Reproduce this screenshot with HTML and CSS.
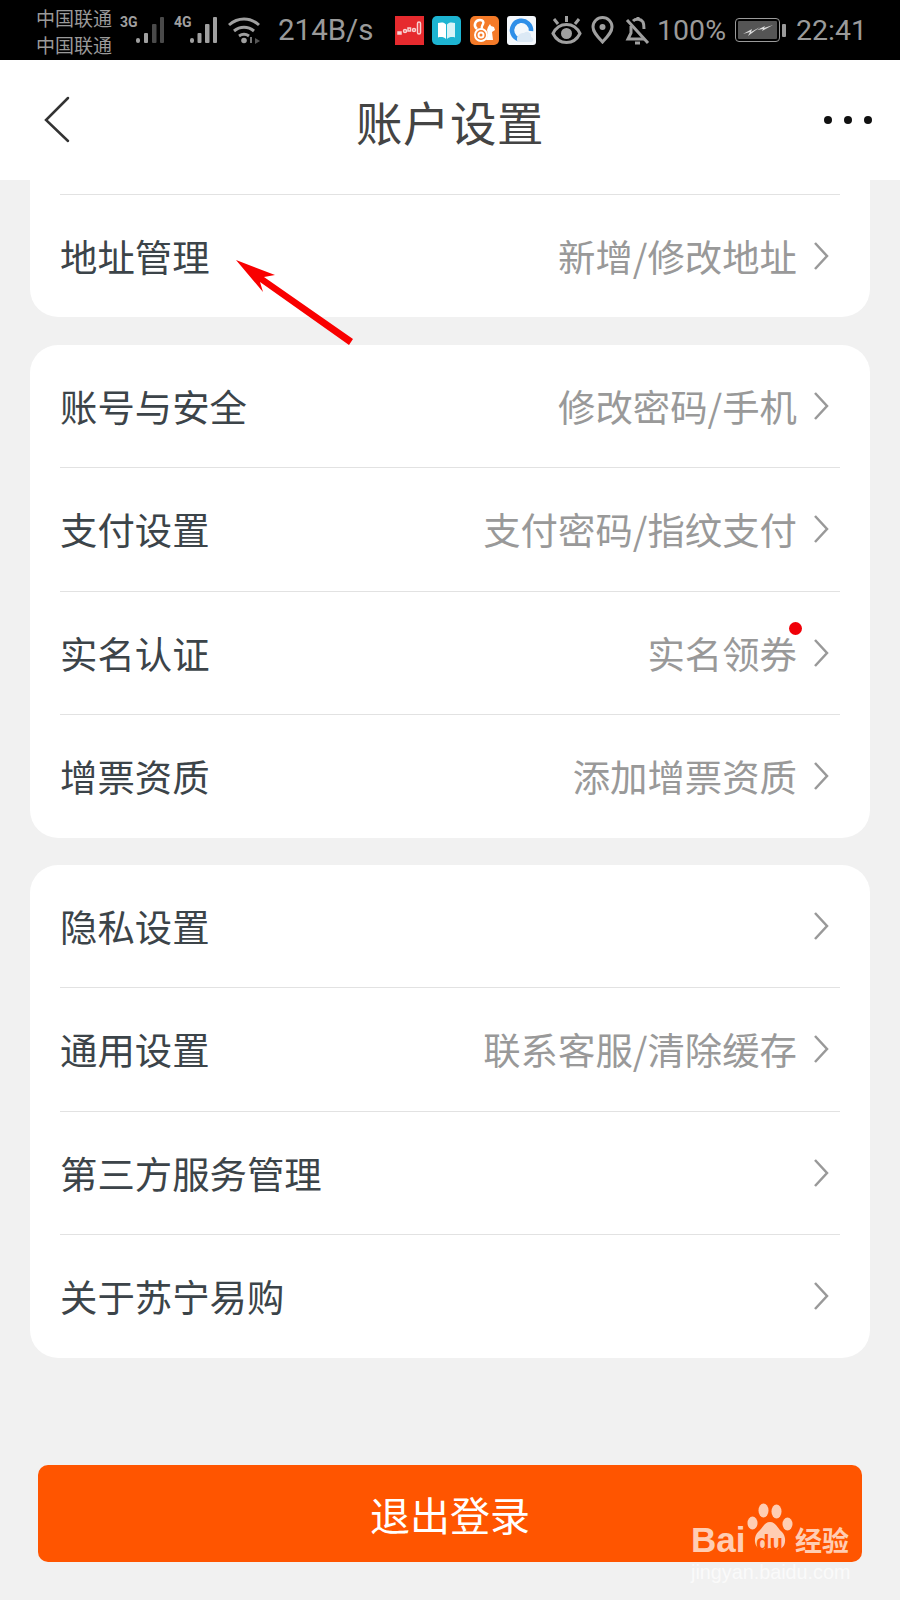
FILE: index.html
```html
<!DOCTYPE html>
<html lang="zh-CN">
<head>
    <meta charset="UTF-8">
    <meta name="viewport" content="width=device-width, initial-scale=1.0">
    <title>账户设置</title>
    <link rel="stylesheet" href="styles.css">
</head>
<body>
    <div class="page">
        <div class="status-bar">
            <div class="status-left">
                <div class="carrier"><span>中国联通</span><span>中国联通</span></div>
                <div class="signal">
                    <span class="net">3G</span>
                    <svg width="30" height="30" viewBox="0 0 30 30"><g fill="#a0a0a0"><rect x="1" y="23" width="4" height="5" rx="2"/><rect x="9" y="18" width="4" height="10" rx="1"/></g><g fill="#4a4a4a"><rect x="17" y="9" width="4.500" height="19" rx="1"/><rect x="25" y="2" width="4" height="26" rx="1"/></g></svg>
                </div>
                <div class="signal">
                    <span class="net">4G</span>
                    <svg width="30" height="30" viewBox="0 0 30 30"><g fill="#a0a0a0"><rect x="1" y="23" width="4" height="5" rx="2"/><rect x="8.500" y="18" width="4" height="10" rx="1"/><rect x="16" y="9" width="4.500" height="19" rx="1"/><rect x="24" y="2" width="4" height="26" rx="1"/></g></svg>
                </div>
                <svg class="wifi" width="33" height="30" viewBox="0 0 33 30" fill="none" stroke="#a0a0a0" stroke-width="3"><path d="M1 10c9-8 21-8 30 0"/><path d="M6 16c6-5 14-5 20 0"/><path d="M11 21c3-2 7-2 10 0"/><circle cx="16" cy="25.500" r="2.800" fill="#a0a0a0" stroke="none"/><path d="M22 22h2v6h-2z" fill="#777" stroke="none"/><path d="M27 23l5 3-5 3z" fill="#555" stroke="none"/></svg>
                <span class="speed">214B/s</span>
                <div class="apps">
                    <div class="app app-red"><svg width="29" height="29" viewBox="0 0 29 29" fill="none" stroke="#f8d2d2" stroke-width="1.500"><rect x="3" y="16" width="3" height="2" fill="#f8d2d2"/><circle cx="10" cy="15" r="1.500"/><rect x="13" y="12" width="2.500" height="3"/><circle cx="19" cy="14" r="1.500"/><rect x="22.500" y="6" width="3" height="12" rx="1.500"/></svg></div>
                    <div class="app app-blue"><svg width="29" height="29" viewBox="0 0 29 29"><path d="M6 7c3-1 6.500-1 8 1.500V23c-2-2-5-2.500-8-1.500z" fill="#fff"/><path d="M23 7c-3-1-6.500-1-8 1.500V23c2-2 5-2.500 8-1.500z" fill="#d8f3f7"/></svg></div>
                    <div class="app app-orange"><svg width="29" height="29" viewBox="0 0 29 29" fill="none" stroke="#fff" stroke-width="2"><circle cx="11" cy="19" r="6"/><circle cx="11" cy="19" r="2.500"/><path d="M7 13C3 10 5 4 10 4c3 0 4 2 3 4-1 2-2 3-1 5" stroke-width="2.500"/><path d="M17 14l1-3 2-3 1 2 3 1 1 3-3 2 1 8h-7c2-3 2-7 1-10z" fill="#fff" stroke="none"/></svg></div>
                    <div class="app app-white"><svg width="29" height="29" viewBox="0 0 29 29"><path d="M20 22a9.500 9.500 0 1 1 4-7" fill="none" stroke="#2f8fe8" stroke-width="4.500"/><path d="M11 26c-3-4 1-10 6-9 3-3 8 0 7 4 3 1 3 5 0 5z" fill="#dce9f5"/></svg></div>
                </div>
            </div>
            <div class="status-right">
                <svg width="31" height="30" viewBox="0 0 31 30" fill="none" stroke="#a0a0a0" stroke-width="3"><path d="M2 18.500c6-12 21-12 27 0-6 12-21 12-27 0z"/><circle cx="15.500" cy="18.500" r="5.500" fill="#a0a0a0" stroke="none"/><path d="M3 4l4 5M15.500 1v6M28 4l-4 5"/></svg>
                <svg class="pin" width="23" height="28" viewBox="0 0 23 28" fill="none" stroke="#a0a0a0" stroke-width="3"><path d="M11.500 26C6 20 2 16 2 11a9.500 9.500 0 0 1 19 0c0 5-4 9-9.500 15z"/><circle cx="11.500" cy="11" r="3" fill="#a0a0a0" stroke="none"/></svg>
                <svg width="25" height="30" viewBox="0 0 25 30" fill="none" stroke="#a0a0a0" stroke-width="3"><path d="M6 11v7l-3 6h16"/><path d="M8 6c3-3 8-2 10 1 1 2 1 4 1 7"/><path d="M10 28h5M13 5V2M2 5l21 23"/></svg>
                <span class="pct">100%</span>
                <div class="battery">
                    <div class="battery-body"><svg width="36" height="14" viewBox="0 0 36 14" fill="#ddd"><path d="M3 11l9-5-1 3 9-5-12 9 2-4zM17 7l8-4-1 2 9-3-11 6 1-2z"/></svg></div>
                    <div class="battery-cap"></div>
                </div>
                <span class="clock">22:41</span>
            </div>
        </div>

        <div class="nav-bar">
            <svg class="nav-back" width="28" height="48" viewBox="0 0 28 48" fill="none" stroke="#333" stroke-width="2.500" stroke-linecap="round"><path d="M24 2L2 24l22 21"/></svg>
            <h1 class="nav-title">账户设置</h1>
            <div class="nav-more"><span></span><span></span><span></span></div>
        </div>

        <div class="content">
            <div class="card card-cut">
                <div class="card-cut-top"></div>
                <div class="row">
                    <span class="row-label">地址管理</span>
                    <span class="row-value">新增/修改地址</span>
                    <svg class="chevron" width="16" height="28" viewBox="0 0 16 28" fill="none" stroke="#999" stroke-width="2.500"><path d="M2 1l12 13L2 27"/></svg>
                </div>
            </div>

            <div class="card">
                <div class="row">
                    <span class="row-label">账号与安全</span>
                    <span class="row-value">修改密码/手机</span>
                    <svg class="chevron" width="16" height="28" viewBox="0 0 16 28" fill="none" stroke="#999" stroke-width="2.500"><path d="M2 1l12 13L2 27"/></svg>
                </div>
                <div class="row">
                    <span class="row-label">支付设置</span>
                    <span class="row-value">支付密码/指纹支付</span>
                    <svg class="chevron" width="16" height="28" viewBox="0 0 16 28" fill="none" stroke="#999" stroke-width="2.500"><path d="M2 1l12 13L2 27"/></svg>
                </div>
                <div class="row">
                    <span class="row-label">实名认证</span>
                    <span class="row-value has-dot">实名领券</span>
                    <svg class="chevron" width="16" height="28" viewBox="0 0 16 28" fill="none" stroke="#999" stroke-width="2.500"><path d="M2 1l12 13L2 27"/></svg>
                </div>
                <div class="row">
                    <span class="row-label">增票资质</span>
                    <span class="row-value">添加增票资质</span>
                    <svg class="chevron" width="16" height="28" viewBox="0 0 16 28" fill="none" stroke="#999" stroke-width="2.500"><path d="M2 1l12 13L2 27"/></svg>
                </div>
            </div>

            <div class="card card-last">
                <div class="row">
                    <span class="row-label">隐私设置</span>
                    <svg class="chevron" width="16" height="28" viewBox="0 0 16 28" fill="none" stroke="#999" stroke-width="2.500"><path d="M2 1l12 13L2 27"/></svg>
                </div>
                <div class="row">
                    <span class="row-label">通用设置</span>
                    <span class="row-value">联系客服/清除缓存</span>
                    <svg class="chevron" width="16" height="28" viewBox="0 0 16 28" fill="none" stroke="#999" stroke-width="2.500"><path d="M2 1l12 13L2 27"/></svg>
                </div>
                <div class="row">
                    <span class="row-label">第三方服务管理</span>
                    <svg class="chevron" width="16" height="28" viewBox="0 0 16 28" fill="none" stroke="#999" stroke-width="2.500"><path d="M2 1l12 13L2 27"/></svg>
                </div>
                <div class="row">
                    <span class="row-label">关于苏宁易购</span>
                    <svg class="chevron" width="16" height="28" viewBox="0 0 16 28" fill="none" stroke="#999" stroke-width="2.500"><path d="M2 1l12 13L2 27"/></svg>
                </div>
            </div>

            <button type="button" class="logout-button">退出登录</button>
        </div>

        <!-- red annotation arrow on top of the screenshot -->
        <svg class="annotation" width="900" height="400" viewBox="0 0 900 400"><path d="M236 260L275 275 264 277 353 339 349 345 260 282 263 292z" fill="#f90000"/></svg>

        <div class="watermark">
            <div class="watermark-logo">
                <span class="wm-bai">Bai</span>
                <svg class="wm-paw" width="46" height="52" viewBox="0 0 46 52" fill="#ffcdb3"><ellipse cx="5.500" cy="20" rx="5" ry="6.500"/><ellipse cx="16.500" cy="7.500" rx="5" ry="7"/><ellipse cx="29.500" cy="8.500" rx="5" ry="7"/><ellipse cx="40.500" cy="21" rx="5" ry="6.500"/><path d="M23 19c6 0 7 6 12 10 5 5 4 16-3 17-4 1-6-1-9-1s-5 2-9 1c-7-1-8-12-3-17 5-4 6-10 12-10z"/></svg>
                <span class="wm-du">du</span>
                <span class="wm-jy">经验</span>
            </div>
            <div class="watermark-url">jingyan.baidu.com</div>
        </div>
    </div>
</body>
</html>
```

FILE: styles.css
```css
* {
    margin: 0;
    padding: 0;
    box-sizing: border-box;
}

body {
    font-family: "Noto Sans CJK SC", Roboto, sans-serif;
    background-color: #f1f1f1;
}

.page {
    position: relative;
    width: 900px;
    height: 1600px;
    overflow: hidden;
    background-color: #f1f1f1;
}

/* status bar */
.status-bar {
    display: flex;
    justify-content: space-between;
    align-items: center;
    height: 60px;
    padding: 0 33px 0 36px;
    background-color: #000;
    color: #9a9a9a;
}

.status-left,
.status-right {
    display: flex;
    align-items: center;
}

.status-bar svg {
    display: block;
}

.carrier {
    display: flex;
    flex-direction: column;
    width: 84px;
    margin-top: 2px;
    font-size: 19px;
    line-height: 27px;
}

.signal {
    display: flex;
    align-items: flex-start;
    margin-right: 9px;
}

.net {
    width: 15px;
    margin-top: 0;
    font-family: "Liberation Sans Narrow", Roboto, sans-serif;
    font-size: 14px;
    font-weight: 700;
    line-height: 14px;
    color: #a0a0a0;
}

.speed {
    margin-left: 17px;
    font-family: Roboto, sans-serif;
    font-size: 29.5px;
}

.apps {
    display: flex;
    gap: 8.5px;
    margin-left: 21px;
}

.app {
    width: 29px;
    height: 29px;
    border-radius: 3px;
    overflow: hidden;
}

.app-red { background-color: #e62a2e; border-radius: 0; }
.app-blue { background-color: #1db4d2; border-radius: 5px; }
.app-orange { background-color: #f47a28; border-radius: 5px; }
.app-white { background-color: #f4f8fc; }

.status-right {
    gap: 9px;
}

.pin {
    margin-right: 2px;
}

.pct,
.clock {
    font-family: Roboto, sans-serif;
    font-size: 28.5px;
}

.pct {
    margin-left: -2px;
}

.battery {
    display: flex;
    align-items: center;
    gap: 2px;
    margin-right: 1px;
}

.battery-body {
    display: flex;
    align-items: center;
    justify-content: center;
    width: 45px;
    height: 24px;
    padding: 2px;
    border: 1.5px solid #9a9a9a;
    border-radius: 4px;
    background-color: #555;
    background-clip: content-box;
}

.battery-cap {
    width: 4px;
    height: 13px;
    border-radius: 1px;
    background-color: #9a9a9a;
}

/* nav bar */
.nav-bar {
    display: grid;
    grid-template-columns: 1fr auto 1fr;
    align-items: center;
    height: 120px;
    padding: 0 28px 0 44px;
    background-color: #fff;
}

.nav-back {
    display: block;
}

.nav-title {
    margin-left: -16px;
    font-size: 46.5px;
    font-weight: 400;
    color: #444;
    letter-spacing: 0.5px;
}

.nav-more {
    display: flex;
    justify-content: flex-end;
    gap: 12px;
}

.nav-more span {
    width: 8px;
    height: 8px;
    border-radius: 50%;
    background-color: #111;
}

/* cards and rows */
.content {
    display: flex;
    flex-direction: column;
    gap: 28px;
    padding: 0 30px;
}

.card {
    padding: 0 30px;
    background-color: #fff;
    border-radius: 28px;
}

.card-cut {
    border-radius: 0 0 28px 28px;
}

.card-last {
    margin-top: -1px;
}

.card-cut-top {
    height: 15px;
    border-bottom: 1px solid #e2e2e2;
}

.row {
    display: flex;
    align-items: center;
    height: 123.25px;
    border-bottom: 1px solid #e2e2e2;
}

.row:last-child {
    border-bottom: none;
}

.card-cut .row {
    height: 122px;
}

.row-label {
    font-size: 37.4px;
    color: #3c4449;
}

.row-value {
    position: relative;
    margin-left: auto;
    font-size: 37.4px;
    color: #999;
}

.row-value + .chevron {
    margin-left: 16px;
}

.chevron {
    display: block;
    flex-shrink: 0;
    margin-left: auto;
    margin-right: 11px;
}

.has-dot::after {
    content: "";
    position: absolute;
    top: -4px;
    right: -5px;
    width: 13px;
    height: 13px;
    border-radius: 50%;
    background-color: #f00008;
}

.logout-button {
    display: block;
    width: 824px;
    height: 97px;
    margin: 79px 0 0 8px;
    border: none;
    border-radius: 10px;
    background-color: #ff5500;
    color: #fff;
    font-family: "Noto Sans CJK SC", sans-serif;
    font-size: 40px;
}

/* overlays */
.annotation {
    position: absolute;
    top: 0;
    left: 0;
}

.watermark {
    position: absolute;
    left: 691px;
    top: 1503px;
    width: 170px;
}

.watermark-logo {
    position: relative;
    height: 54px;
    color: #ffcdb3;
}

.wm-bai {
    position: absolute;
    left: 0;
    bottom: 0;
    font-family: "Liberation Sans", sans-serif;
    font-size: 35px;
    font-weight: 700;
    line-height: 34px;
}

.wm-paw {
    position: absolute;
    left: 56px;
    top: 0;
}

.wm-du {
    position: absolute;
    left: 65px;
    bottom: 3px;
    font-family: "Liberation Sans", sans-serif;
    font-size: 22px;
    font-weight: 700;
    line-height: 22px;
    color: #ff5500;
}

.wm-jy {
    position: absolute;
    left: 104px;
    bottom: 0;
    font-size: 27px;
    font-weight: 700;
    line-height: 34px;
}

.watermark-url {
    margin-top: 3px;
    font-family: "Liberation Sans", sans-serif;
    font-size: 19.8px;
    line-height: 24px;
    color: rgba(255, 255, 255, 0.7);
    white-space: nowrap;
}
```
